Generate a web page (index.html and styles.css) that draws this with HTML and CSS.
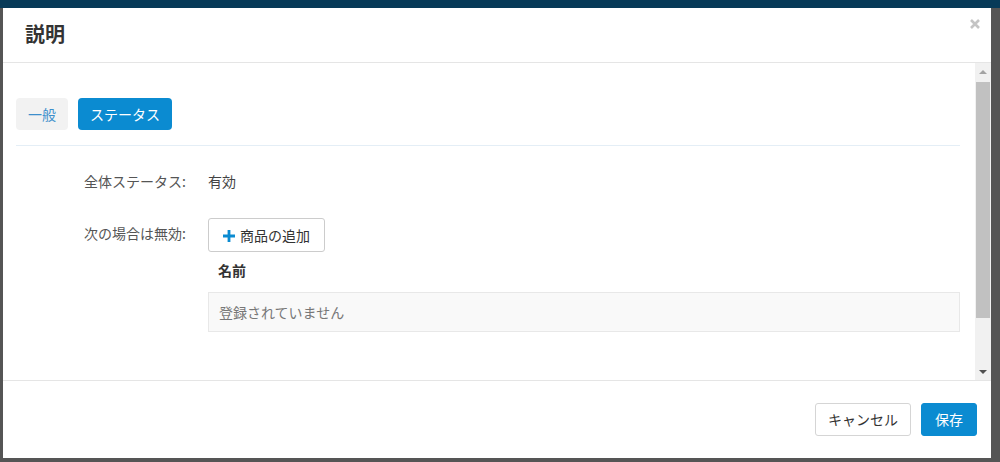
FILE: index.html
```html
<!DOCTYPE html>
<html lang="ja">
  <head>
    <meta charset="UTF-8" />
    <meta name="viewport" content="width=device-width, initial-scale=1.0" />
    <title>説明</title>
    <link rel="stylesheet" href="styles.css">
  </head>
  <body>
    <!-- 背景のナビゲーションバー -->
    <div class="page-bar"></div>

    <!-- モーダル -->
    <div class="modal">
      <div class="modal-header">
        <h2 class="modal-title">説明</h2>
        <span class="modal-close">
          <svg viewBox="0 0 10 10" width="10" height="10">
            <path d="M1 1L9 9M9 1L1 9" stroke="#c4c4c4" stroke-width="2.6" />
          </svg>
        </span>
      </div>

      <div class="modal-body">
        <div class="body-content">
          <!-- タブ -->
          <div class="tabs">
            <button class="tab">一般</button>
            <button class="tab active">ステータス</button>
          </div>

          <div class="form-row">
            <div class="form-label">全体ステータス:</div>
            <div class="form-value">有効</div>
          </div>

          <div class="form-row">
            <div class="form-label label-btn">次の場合は無効:</div>
            <div class="form-value">
              <button class="btn-add">
                <svg class="icon-plus" viewBox="0 0 12 12" width="12" height="12">
                  <path d="M4.6 0h2.8v4.6H12v2.8H7.4V12H4.6V7.4H0V4.6h4.6z" fill="#0b8bd1" />
                </svg>
                商品の追加
              </button>
              <div class="list-head">名前</div>
              <div class="list-empty">登録されていません</div>
            </div>
          </div>
        </div>

        <!-- スクロールバー -->
        <div class="scrollbar">
          <span class="arrow-up"></span>
          <div class="thumb"></div>
          <span class="arrow-down"></span>
        </div>
      </div>

      <div class="modal-footer">
        <button class="btn">キャンセル</button>
        <button class="btn btn-primary">保存</button>
      </div>
    </div>
  </body>
</html>
```

FILE: styles.css
```css
:root {
  --overlay: #555555;
  --navy: #073a58;
  --blue: #0b8bd1;
  --text-main: #333333;
  --text-label: #555555;
  --border: #e5e5e5;
}

* {
  box-sizing: border-box;
  margin: 0;
  padding: 0;
}
body {
  font-family: "Noto Sans CJK JP", "Noto Sans", sans-serif;
  background-color: var(--overlay);
  color: var(--text-main);
  font-size: 14px;
  height: 462px;
  overflow: hidden;
}
button {
  font-family: inherit;
}
.page-bar {
  height: 8px;
  background-color: var(--navy);
}
/* モーダル本体 */
.modal {
  width: 988px;
  height: 450px;
  margin-left: 3px;
  background-color: #fff;
  display: flex;
  flex-direction: column;
}
.modal-header {
  height: 55px;
  padding: 0 22px;
  border-bottom: 1px solid var(--border);
  display: flex;
  align-items: center;
  justify-content: space-between;
}
.modal-title {
  font-size: 20px;
  font-weight: bold;
  color: #333;
  line-height: 1;
  margin-top: -2px;
}
.modal-close {
  display: flex;
  margin-right: -11px;
  margin-top: -22px;
}
/* 本文（スクロール領域） */
.modal-body {
  height: 318px;
  display: flex;
  border-bottom: 1px solid var(--border);
}
.body-content {
  flex: 1;
  padding: 35px 15px 0 13px;
}
.tabs {
  display: flex;
  gap: 10px;
  padding-bottom: 15px;
  border-bottom: 1px solid #e4eef6;
  margin-bottom: 24px;
}
.tab {
  height: 32px;
  padding: 0 12px;
  border: none;
  border-radius: 4px;
  background-color: #f2f2f2;
  color: #3d8fcc;
  font-size: 14px;
}
.tab.active {
  background-color: var(--blue);
  color: #fff;
}
.form-row {
  display: flex;
  margin-bottom: 24px;
}
.form-label {
  width: 171px;
  padding-right: 1px;
  text-align: right;
  color: var(--text-label);
  line-height: 23px;
}
.form-label.label-btn {
  line-height: 33px;
}
.form-value {
  flex: 1;
  margin-left: 21px;
  color: #444;
  line-height: 23px;
}
.btn-add {
  height: 34px;
  padding: 0 14px;
  background-color: #fff;
  border: 1px solid #cccccc;
  border-radius: 3px;
  color: #333;
  font-size: 14px;
  display: inline-flex;
  align-items: center;
  gap: 5px;
  margin-top: 1px;
}
.icon-plus {
  margin-top: 1px;
}
.list-head {
  font-weight: bold;
  color: #333;
  padding: 6px 10px 0;
  line-height: 24px;
  margin-bottom: 10px;
}
.list-empty {
  height: 40px;
  padding: 0 10px;
  background-color: #f9f9f9;
  border: 1px solid #e8e8e8;
  color: #777;
  line-height: 38px;
}
/* スクロールバー */
.scrollbar {
  width: 16px;
  background-color: #f1f1f1;
  display: flex;
  flex-direction: column;
  align-items: center;
}
.arrow-up,
.arrow-down {
  height: 17px;
  width: 16px;
  display: flex;
  align-items: center;
  justify-content: center;
}
.arrow-up::before {
  content: "";
  border-left: 4px solid transparent;
  border-right: 4px solid transparent;
  border-bottom: 4px solid #a3a3a3;
}
.arrow-down::before {
  content: "";
  border-left: 4px solid transparent;
  border-right: 4px solid transparent;
  border-top: 4px solid #505050;
}
.arrow-down {
  margin-top: auto;
}
.thumb {
  width: 14px;
  height: 236px;
  margin-top: 2px;
  background-color: #c1c1c1;
}
/* フッター */
.modal-footer {
  flex: 1;
  display: flex;
  justify-content: flex-end;
  align-items: center;
  gap: 10px;
  padding: 0 14px 1px;
}
.btn {
  height: 33px;
  padding: 0 12px;
  font-size: 14px;
  border: 1px solid #d5d5d5;
  border-radius: 3px;
  background-color: #fff;
  color: #333;
}
.btn-primary {
  padding: 0 13px;
  background-color: var(--blue);
  border-color: var(--blue);
  color: #fff;
}
```
